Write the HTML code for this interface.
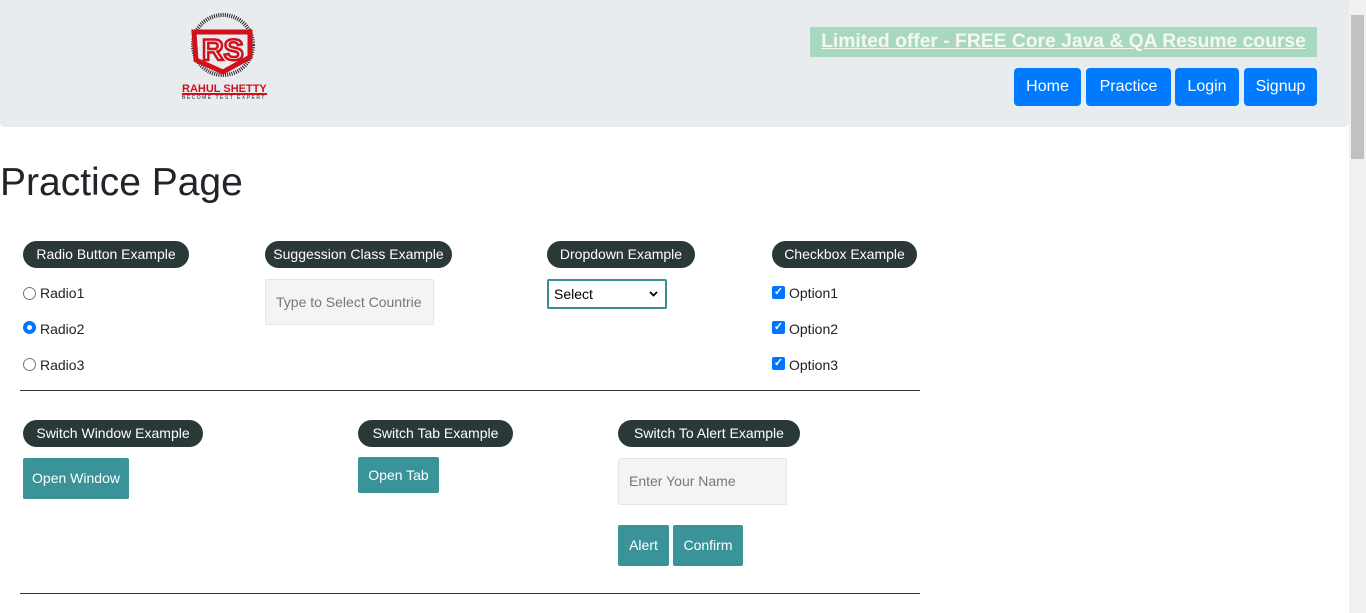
<!DOCTYPE html>
<html><head><style>
*{box-sizing:border-box;margin:0;padding:0}
body{width:1366px;height:613px;overflow:hidden;background:#fff;font-family:"Liberation Sans",sans-serif;color:#212529;position:relative}
.a{position:absolute}
.hdr{left:0;top:0;width:1349px;height:127px;background:#e9ecef;border-radius:0 0 5px 5px}
.offer{left:810px;top:27px;width:507px;height:30px;background:#a8d8bf;color:#f4f8f0;font-weight:bold;font-size:19.3px;text-decoration:underline;text-align:center;line-height:30px}
.nb{top:68px;height:38px;background:#007bff;color:#fff;border-radius:4px;font-size:16px;line-height:38px;text-align:center}
.pill{height:27px;background:#2b3838;color:#fff;border-radius:14px;font-size:14px;line-height:27px;text-align:center}
.lbl{font-size:14px;color:#222}
.btn{background:#3a9399;color:#fff;font-size:14px;text-align:center;border-radius:2px}
.inp{background:#f4f4f4;border:1px solid #e6e6e6;color:#777;font-size:14px;padding-left:10px;border-radius:2px}
.hr{height:1px;background:#2b3838;left:20px;width:900px}
.rad{width:13px;height:13px;border:1px solid #777;border-radius:50%}
.cb{width:13px;height:13px;background:#0075ff;border-radius:2px;color:#fff;font-size:11px;line-height:13px;text-align:center;font-weight:bold}
</style></head><body>
<div class="a hdr"></div>
<svg class="a" style="left:180px;top:12px" width="90" height="88" viewBox="0 0 90 88">
<circle cx="43" cy="33" r="30" fill="none" stroke="#222" stroke-width="4" stroke-dasharray="1 1.2"/>
<path d="M14 20 H70 V45 L43 60 L16 48 Z" fill="#e9ecef" stroke="#d0111b" stroke-width="5"/>
<text x="22" y="48" font-size="30" font-weight="bold" fill="none" stroke="#d0111b" stroke-width="2.5" font-family="Liberation Sans">RS</text>
<text x="2" y="80" font-size="11" font-weight="bold" fill="#d0111b" font-family="Liberation Sans">RAHUL SHETTY</text>
<rect x="2" y="81" width="85" height="2" fill="#d0111b"/>
<text x="2" y="87" font-size="5" fill="#222" font-family="Liberation Sans" letter-spacing="1.5">BECOME TEST EXPERT</text>
</svg>
<div class="a offer">Limited offer - FREE Core Java &amp; QA Resume course</div>
<div class="a nb" style="left:1014px;width:67px">Home</div>
<div class="a nb" style="left:1086px;width:85px">Practice</div>
<div class="a nb" style="left:1175px;width:64px">Login</div>
<div class="a nb" style="left:1244px;width:73px">Signup</div>
<div class="a" style="left:1349px;top:0;width:17px;height:613px;background:#f1f1f1"></div>
<div class="a" style="left:1351px;top:15px;width:13px;height:144px;background:#c1c1c1"></div>
<div class="a" style="left:0;top:161px;font-size:39px;color:#212529">Practice Page</div>

<div class="a pill" style="left:23px;top:241px;width:166px">Radio Button Example</div>
<div class="a pill" style="left:265px;top:241px;width:187px">Suggession Class Example</div>
<div class="a pill" style="left:547px;top:241px;width:148px">Dropdown Example</div>
<div class="a pill" style="left:772px;top:241px;width:145px">Checkbox Example</div>

<div class="a rad" style="left:23px;top:287px"></div><div class="a lbl" style="left:40px;top:285px">Radio1</div>
<div class="a rad" style="left:23px;top:321px;border:4px solid #0075ff"></div><div class="a lbl" style="left:40px;top:321px">Radio2</div>
<div class="a rad" style="left:23px;top:358px"></div><div class="a lbl" style="left:40px;top:357px">Radio3</div>

<div class="a inp" style="left:265px;top:279px;width:169px;height:46px;line-height:44px">Type to Select Countrie</div>
<div class="a" style="left:547px;top:279px;width:120px;height:30px;border:2px solid #3a8e91;border-radius:2px;font-size:14px;line-height:26px;padding-left:5px;color:#000">Select<svg style="position:absolute;right:7px;top:10px" width="9" height="6" viewBox="0 0 9 6"><path d="M1 1 L4.5 4.5 L8 1" fill="none" stroke="#000" stroke-width="1.8"/></svg></div>

<div class="a cb" style="left:772px;top:286px">✓</div><div class="a lbl" style="left:789px;top:285px">Option1</div>
<div class="a cb" style="left:772px;top:321px">✓</div><div class="a lbl" style="left:789px;top:321px">Option2</div>
<div class="a cb" style="left:772px;top:357px">✓</div><div class="a lbl" style="left:789px;top:357px">Option3</div>

<div class="a hr" style="top:390px"></div>

<div class="a pill" style="left:23px;top:420px;width:180px">Switch Window Example</div>
<div class="a pill" style="left:358px;top:420px;width:155px">Switch Tab Example</div>
<div class="a pill" style="left:618px;top:420px;width:182px">Switch To Alert Example</div>

<div class="a btn" style="left:23px;top:458px;width:106px;height:41px;line-height:41px">Open Window</div>
<div class="a btn" style="left:358px;top:457px;width:81px;height:36px;line-height:36px">Open Tab</div>
<div class="a inp" style="left:618px;top:458px;width:169px;height:47px;line-height:45px">Enter Your Name</div>
<div class="a btn" style="left:618px;top:525px;width:51px;height:41px;line-height:41px">Alert</div>
<div class="a btn" style="left:673px;top:525px;width:70px;height:41px;line-height:41px">Confirm</div>

<div class="a hr" style="top:593px"></div>
</body></html>
